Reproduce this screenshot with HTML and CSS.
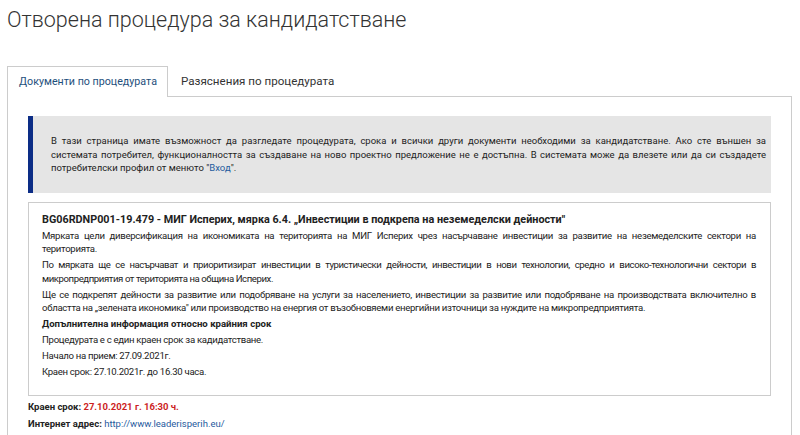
FILE: index.html
```html
<!DOCTYPE html>
<html lang="bg">
<head>
    <meta charset="UTF-8">
    <meta name="viewport" content="width=device-width, initial-scale=1.0">
    <title>Отворена процедура за кандидатстване</title>
    <link rel="stylesheet" href="styles.css">
</head>
<body>
    <h1>Отворена процедура за кандидатстване</h1>

    <ul class="tabs">
        <li class="tab active">Документи по процедурата</li>
        <li class="tab">Разяснения по процедурата</li>
    </ul>

    <div class="tab-panel">
        <div class="notice">
            <p>В тази страница имате възможност да разгледате процедурата, срока и всички други документи необходими за кандидатстване. Ако сте външен за системата потребител, функционалността за създаване на ново проектно предложение не е достъпна. В системата може да влезете или да си създадете потребителски профил от менюто "<a href="#">Вход</a>".</p>
        </div>

        <div class="details">
            <p class="details-title">BG06RDNP001-19.479 - МИГ Исперих, мярка 6.4. „Инвестиции в подкрепа на неземеделски дейности"</p>
            <p>Мярката цели диверсификация на икономиката на територията на МИГ Исперих чрез насърчаване инвестиции за развитие на неземеделските сектори на територията.</p>
            <p class="tight">По мярката ще се насърчават и приоритизират инвестиции в туристически дейности, инвестиции в нови технологии, средно и високо-технологични сектори в микропредприятия от територията на община Исперих.</p>
            <p>Ще се подкрепят дейности за развитие или подобряване на услуги за населението, инвестиции за развитие или подобряване на производствата включително в областта на „зелената икономика" или производство на енергия от възобновяеми енергийни източници за нуждите на микропредприятията.</p>
            <p class="details-subtitle">Допълнителна информация относно крайния срок</p>
            <p>Процедурата е с един краен срок за кадидатстване.</p>
            <p>Начало на прием: 27.09.2021г.</p>
            <p>Краен срок: 27.10.2021г. до 16.30 часа.</p>
        </div>

        <p class="meta"><b>Краен срок:</b> <span class="deadline">27.10.2021 г. 16:30 ч.</span></p>
        <p class="meta"><b>Интернет адрес:</b> <a href="#">http://www.leaderisperih.eu/</a></p>
    </div>
</body>
</html>
```

FILE: styles.css
```css
body {
    font-family: Roboto, 'Noto Sans', sans-serif;
    margin: 0;
    padding: 0 8px 0 7px;
    color: #333;
    background: #fff;
}
h1 {
    font-size: 21.5px;
    font-weight: 300;
    color: #333;
    margin: 0;
    padding-top: 6px;
    line-height: 28px;
}
.tabs {
    list-style: none;
    display: flex;
    margin: 32px 0 0;
    padding: 0;
}
.tab {
    font-size: 11.6px;
    padding: 0 11px 0 12px;
    line-height: 29px;
    color: #333;
    border: 1px solid transparent;
    border-bottom: none;
}
.tab.active {
    font-size: 10.7px;
    color: #1e4f7c;
    border-color: #ccc;
    background: #fff;
    margin-bottom: -1px;
    padding: 0 10px 1px 11px;
    position: relative;
}
.tab-panel {
    border: 1px solid #ccc;
    border-bottom: none;
    padding: 19px 20px 0;
    min-height: 340px;
}
.notice {
    background: #e5e5e5;
    border-left: 5px solid #0c2d86;
    padding: 18px 5px 18px 18px;
}
.notice p {
    margin: 0;
    font-size: 9.5px;
    line-height: 13.5px;
    text-align: justify;
    color: #222;
}
a {
    color: #1f5b9e;
    text-decoration: none;
}
.details {
    margin-top: 9px;
    border: 1px solid #ccc;
    padding: 10px 14px 14px 13px;
    font-size: 9.6px;
    letter-spacing: -0.3px;
    color: #222;
}
.details p {
    margin: 0 0 2.5px;
    line-height: 13.5px;
    text-align: justify;
}
.details p.tight {
    letter-spacing: -0.42px;
}
.details .details-title {
    font-size: 10.8px;
    font-weight: bold;
    letter-spacing: 0;
    text-align: left;
}
.details .details-subtitle {
    font-weight: bold;
    letter-spacing: 0;
    text-align: left;
}
.meta {
    margin: 0;
    font-size: 9.5px;
    line-height: 17px;
    color: #222;
}
.meta:first-of-type {
    margin-top: 2px;
}
.deadline {
    color: #cc1f1f;
    font-weight: bold;
}
```
